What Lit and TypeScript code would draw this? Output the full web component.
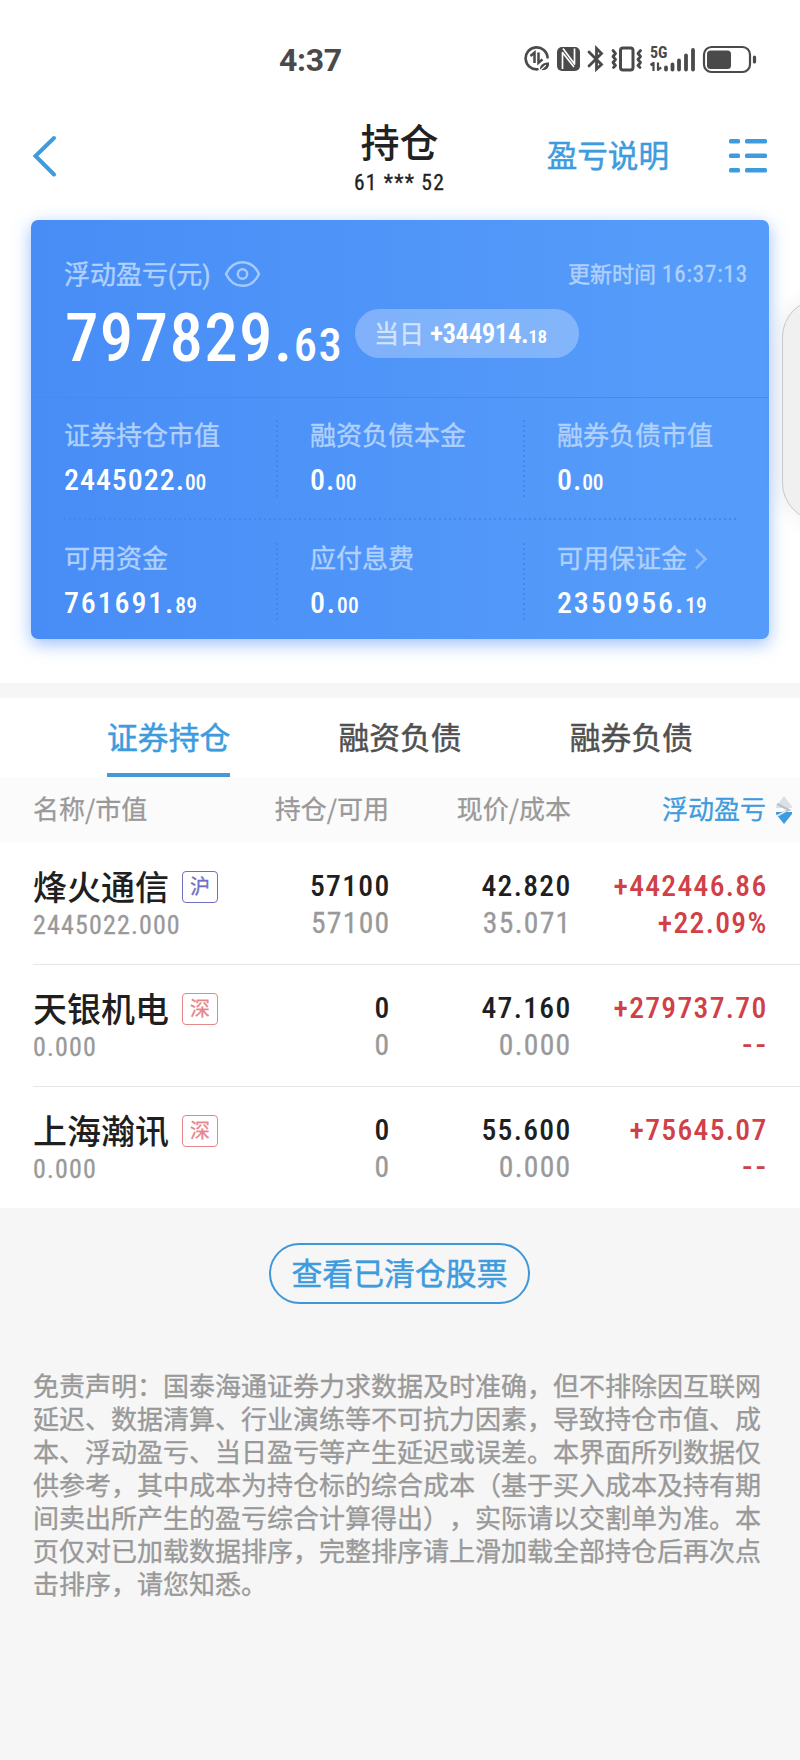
import { LitElement, html, css, svg } from "lit";
import { customElement, property } from "lit/decorators.js";

interface Holding {
  name: string;
  market: string;
  kind: string;
  value: string;
  qty: string;
  avail: string;
  price: string;
  cost: string;
  profit: string;
  rate: string;
}

const HOLDINGS: Holding[] = [
  { name: "烽火通信", market: "沪", kind: "sh", value: "2445022.000", qty: "57100", avail: "57100", price: "42.820", cost: "35.071", profit: "+442446.86", rate: "+22.09%" },
  { name: "天银机电", market: "深", kind: "sz", value: "0.000", qty: "0", avail: "0", price: "47.160", cost: "0.000", profit: "+279737.70", rate: "--" },
  { name: "上海瀚讯", market: "深", kind: "sz", value: "0.000", qty: "0", avail: "0", price: "55.600", cost: "0.000", profit: "+75645.07", rate: "--" },
];

const SUMMARY = [
  [
    { label: "证券持仓市值", int: "2445022.", dec: "00" },
    { label: "融资负债本金", int: "0.", dec: "00" },
    { label: "融券负债市值", int: "0.", dec: "00" },
  ],
  [
    { label: "可用资金", int: "761691.", dec: "89" },
    { label: "应付息费", int: "0.", dec: "00" },
    { label: "可用保证金", int: "2350956.", dec: "19", link: true },
  ],
];

@customElement("status-bar")
class StatusBar extends LitElement {
  static styles = css`
    :host { display: flex; height: 118px; align-items: center; color: #4a4a4a; padding-left: 279px; box-sizing: border-box; }
    .time { font: 700 32px/40px Roboto, sans-serif; width: 245px; letter-spacing: -0.3px; padding-top: 1px; }
    .icons { display: block; width: 240px; height: 30px; }
    .net { font: 700 16px "Roboto Condensed", sans-serif; }
  `;
  render() {
    return html`
      <div class="time">4:37</div>
      <svg class="icons" viewBox="0 0 240 30" fill="none" stroke="#4a4a4a" stroke-linecap="round" stroke-linejoin="round">
        <path d="M23.600 13.500A11 11 0 1 0 13.500 25.300" stroke-width="2.600" />
        <path d="M6.500 12l4-3.400v10.500M14.500 8.500v10.300l4-3.400" stroke-width="2.500" stroke-linecap="butt" stroke-linejoin="miter" />
        <path d="M16 26c-.500-5 3-7.500 9-7.500c.500 5.500-2.500 8.300-9 7.500z" fill="#4a4a4a" stroke="none" />
        <path d="M15.500 27l6-5.500" stroke="#fff" stroke-width="1.200" />
        <rect x="33" y="3" width="23" height="24" rx="5" fill="#4a4a4a" stroke="none" />
        <path d="M38.500 25V8.500L50 23M39 4.500L50.500 20V4.500" stroke="#fff" stroke-width="1.700" stroke-linecap="butt" />
        <path d="M65 8l12.500 12.500l-5 4.500V4.500l5 5l-12.500 12.500" stroke-width="2.800" stroke-linejoin="miter" />
        <rect x="96.500" y="4" width="12.500" height="22" rx="2.500" stroke-width="3" />
        <path d="M89 6.500l2.500 3l-2.500 3l2.500 3l-2.500 3l2.500 3l-2 2M116.500 6.500l-2.500 3l2.500 3l-2.500 3l2.500 3l-2.500 3l2 2" stroke-width="2.800" />
        <text class="net" x="126" y="14.300" fill="#4a4a4a" stroke="none">5G</text>
        <path d="M126.500 21l3-2.200v8.200M134 18.500v7.500l3.200-2.600" stroke-width="2.200" stroke-linecap="butt" />
        <path d="M142 23.500v2M148.500 20.500v5M155 16.500v9M162 11.500v14M169 6v19.500" stroke-width="3.800" />
        <rect x="180" y="3" width="46" height="25" rx="7.500" stroke-width="2.200" />
        <rect x="183" y="6.500" width="24" height="18.500" rx="3.500" fill="#4a4a4a" stroke="none" />
        <path d="M230.500 13v5" stroke-width="3.200" />
      </svg>
    `;
  }
}

@customElement("page-header")
class PageHeader extends LitElement {
  static styles = css`
    :host { display: grid; grid-template-columns: 1fr auto 1fr; height: 102px; box-sizing: border-box; padding: 0 33px 0 32px; font-family: "Noto Sans CJK SC", sans-serif; }
    .back { width: 26px; height: 44px; margin-top: 16px; }
    .title { text-align: center; color: #222; }
    .title h1 { margin: 2px 0 0; font-size: 39px; font-weight: 500; line-height: 40px; }
    .account { font: 400 21.5px/24px "Roboto Condensed", sans-serif; margin-top: 11px; letter-spacing: 1.200px; color: #222; -webkit-text-stroke: 0.3px currentColor; }
    .right { display: flex; justify-content: flex-end; gap: 59px; color: #3e9bdd; }
    .help { font-size: 30.6px; line-height: 40px; margin-top: 16px; -webkit-text-stroke: 0.5px currentColor; }
    .menu { width: 39px; height: 36px; margin-top: 20px; }
  `;
  render() {
    return html`
      <svg class="back" viewBox="0 0 26 44" fill="none" stroke="#3e9bdd" stroke-width="4" stroke-linecap="round"><path d="M22 4L3.500 22L22 40.500" /></svg>
      <div class="title"><h1>持仓</h1><div class="account">61 *** 52</div></div>
      <div class="right">
        <div class="help">盈亏说明</div>
        <svg class="menu" viewBox="0 0 39 36" fill="#3e9bdd">
          ${[1, 15.500, 30].map((y) => svg`<rect x="1" y=${y} width="11" height="4.500" rx="1.500" /><rect x="17" y=${y} width="22" height="4.500" rx="1.500" />`)}
        </svg>
      </div>
    `;
  }
}

@customElement("profit-card")
class ProfitCard extends LitElement {
  static styles = css`
    :host { display: block; margin: 0 31px; height: 419px; border-radius: 7px; background: linear-gradient(90deg, #488df6, #559bfa 85%); box-shadow: 0 5px 17px rgba(72, 141, 246, 0.55); color: #fff; font-family: "Noto Sans CJK SC", sans-serif; }
    .top { height: 178px; box-sizing: border-box; padding: 34px 22px 0 33px; border-bottom: 1px solid #468beb; }
    .line { display: flex; align-items: center; height: 40px; color: #b0d0fd; -webkit-text-stroke: 0.4px currentColor; }
    .caption { font-size: 26px; line-height: 38px; }
    .paren { font-family: "Roboto Condensed", sans-serif; }
    .eye { width: 37px; height: 28px; margin-left: 13px; }
    .updated { margin-left: auto; font-size: 22px; line-height: 38px; white-space: nowrap; padding-bottom: 2px; }
    .clock { font: 400 23px/38px "Roboto Condensed", sans-serif; letter-spacing: 0.9px; margin: 0 -1px 0 1px; }
    .total { display: flex; align-items: center; height: 60px; margin-top: 10px; }
    .num { font-family: "Roboto Condensed", sans-serif; font-weight: 500; }
    .big { font-size: 67px; line-height: 70px; letter-spacing: 1.300px; width: 291px; white-space: nowrap; padding-top: 14px; text-indent: 1px; }
    .big small { font-size: 46.500px; letter-spacing: 1.500px; }
    .pill { box-sizing: border-box; width: 224px; height: 49px; border-radius: 25px; margin-bottom: 2px; padding-left: 19px; display: flex; align-items: center; background: rgba(255, 255, 255, 0.28); white-space: nowrap; }
    .day { color: #d2e4ff; font-size: 25px; line-height: 44px; margin-right: 6px; padding-bottom: 3px; -webkit-text-stroke: 0.4px currentColor; }
    .today { font-size: 27px; font-weight: 600; line-height: 49px; padding-top: 5px; letter-spacing: -0.500px; }
    .today small { font-size: 19px; letter-spacing: -0.300px; }
    .summary { padding: 22px 32px 0 33px; }
    .row { display: grid; grid-template-columns: 212px 247px 1fr; height: 77px; }
    .rule { height: 2px; margin: 21px 0 23px; background: repeating-linear-gradient(90deg, #4287ec 0 2px, transparent 2px 5px); }
    .cell { padding-left: 34px; white-space: nowrap; background: repeating-linear-gradient(180deg, #4287ec 0 2px, transparent 2px 5px) no-repeat 0 0 / 2px 100%; }
    .cell:first-child { padding-left: 0; background: none; }
    .label { color: #b0d0fd; font-size: 26px; line-height: 30px; height: 30px; display: flex; align-items: center; margin-top: -1px; -webkit-text-stroke: 0.4px currentColor; }
    .value { font-size: 30px; line-height: 30px; margin-top: 16px; letter-spacing: 0.950px; }
    .value small { font-size: 21.500px; letter-spacing: -0.200px; }
    .wide { letter-spacing: 1.850px; }
    .wide small { letter-spacing: 0.200px; }
    .arrow { width: 14px; height: 22px; margin-left: 7px; margin-top: 4px; }
  `;
  render() {
    const row = (cells: any[], i: number) => html`
      <div class="row">
        ${cells.map((c) => html`
          <div class="cell">
            <div class="label">${c.label}${c.link ? html`<svg class="arrow" viewBox="0 0 14 22" fill="none" stroke="#8dbbfb" stroke-width="2.500"><path d="M2 1.500L11.500 11L2 20.500" /></svg>` : ""}</div>
            <div class="value num ${i ? "wide" : ""}">${c.int}<small>${c.dec}</small></div>
          </div>`)}
      </div>`;
    return html`
      <div class="top">
        <div class="line">
          <span class="caption">浮动盈亏<span class="paren">(</span>元<span class="paren">)</span></span>
          <svg class="eye" viewBox="0 0 37 28" fill="none" stroke="#a5cafd" stroke-width="2.400">
            <path d="M2 14C5.500 6.500 11.500 2.200 18.500 2.200S31.500 6.500 35 14C31.500 21.500 25.500 25.800 18.500 25.800S5.500 21.500 2 14z" stroke-linejoin="round" />
            <circle cx="18.500" cy="14" r="4.700" />
          </svg>
          <span class="updated">更新时间 <span class="clock">16:37:13</span></span>
        </div>
        <div class="total">
          <div class="big num">797829.<small>63</small></div>
          <div class="pill"><span class="day">当日</span><span class="today num">+344914.<small>18</small></span></div>
        </div>
      </div>
      <div class="summary">
        ${row(SUMMARY[0], 0)}
        <div class="rule"></div>
        ${row(SUMMARY[1], 1)}
      </div>
    `;
  }
}

@customElement("holding-row")
class HoldingRow extends LitElement {
  @property({ attribute: false }) item!: Holding;
  @property({ type: Boolean }) last = false;
  static styles = css`
    :host { display: block; background: #fff; font-family: "Noto Sans CJK SC", sans-serif; }
    .body { box-sizing: border-box; margin-left: 33px; height: 122px; border-bottom: 1px solid #e6e6e6; padding: 25px 34px 0 0; display: grid; grid-template-columns: 175px 181px 181px 1fr; }
    .plain { border-bottom: 0; height: 121px; }
    .name { display: flex; align-items: center; height: 36px; font-size: 34px; line-height: 36px; font-weight: 500; color: #1f1f1f; white-space: nowrap; }
    .badge { flex: none; box-sizing: border-box; width: 36px; height: 32px; margin-left: 13px; margin-top: 1px; border: 1.500px solid; border-radius: 4px; font-size: 20px; line-height: 28px; font-weight: 400; text-align: center; -webkit-text-stroke: 0.3px currentColor; }
    .sh { color: #6f6fc4; }
    .sz { color: #e5868b; }
    .num { font-family: "Roboto Condensed", sans-serif; font-size: 29.600px; line-height: 37px; letter-spacing: 1.300px; text-align: right; color: #1f1f1f; margin-right: -1.500px; white-space: nowrap; }
    .grey { color: #999; font-weight: 400; -webkit-text-stroke: 0.3px currentColor; }
    .mv { font-size: 26px; letter-spacing: 1.150px; text-align: left; line-height: 36px; margin-top: 3px; }
    .strong { font-weight: 500; }
    .red { color: #d14046; font-weight: 500; }
    .dash { font-family: Roboto, sans-serif; letter-spacing: 3.600px; margin-right: -3.500px; }
  `;
  render() {
    const h = this.item;
    return html`
      <div class="body ${this.last ? "plain" : ""}">
        <div><div class="name">${h.name}<span class="badge ${h.kind}">${h.market}</span></div><div class="num grey mv">${h.value}</div></div>
        <div><div class="num strong">${h.qty}</div><div class="num grey">${h.avail}</div></div>
        <div><div class="num strong">${h.price}</div><div class="num grey">${h.cost}</div></div>
        <div><div class="num red">${h.profit}</div><div class="num red ${h.rate === "--" ? "dash" : ""}">${h.rate}</div></div>
      </div>
    `;
  }
}

@customElement("app-root")
class AppRoot extends LitElement {
  static styles = css`
    :host { display: block; position: relative; width: 800px; height: 1760px; overflow: hidden; background: #f6f6f6; font-family: "Noto Sans CJK SC", sans-serif; }
    .head { background: #fff; height: 683px; }
    .handle { position: absolute; left: 782px; top: 299px; width: 90px; height: 222px; box-sizing: border-box; border: 1px solid #c8c8c8; border-radius: 38px; background: #f0f0f0; box-shadow: 0 0 22px rgba(0, 0, 0, 0.08); }
    .tabs { margin-top: 15px; height: 79px; padding: 0 53px; background: #fff; display: grid; grid-template-columns: repeat(3, 1fr); justify-items: center; font-size: 30.800px; color: #505050; -webkit-text-stroke: 0.5px currentColor; }
    .tab { box-sizing: border-box; height: 79px; line-height: 75px; border-bottom: 4px solid transparent; }
    .active { color: #3e9bdd; border-bottom-color: #4599d4; }
    .cols { background: #fbfbfb; height: 66px; line-height: 61px; padding: 0 6px 0 33px; display: grid; grid-template-columns: 175px 181px 182px 195px 1fr; text-align: right; font-size: 26px; color: #999; -webkit-text-stroke: 0.3px currentColor; }
    .cols span:first-child { text-align: left; }
    .sorted { color: #3e9bdd; }
    .sort { width: 18px; height: 28px; margin: 19px 0 0 9px; }
    .cleared { display: block; box-sizing: border-box; width: 261px; height: 61px; margin: 35px 0 0 269px; border: 2px solid #3e98d8; border-radius: 31px; background: none; color: #3e9bdd; font: 400 30.900px/52px "Noto Sans CJK SC", sans-serif; padding: 0 0 4px; -webkit-text-stroke: 0.5px currentColor; }
    .note { margin: 64px 0 0 33px; width: 729px; font-size: 26px; line-height: 33px; color: #999; text-spacing-trim: space-all; -webkit-text-stroke: 0.35px currentColor; }
  `;
  render() {
    return html`
      <div class="head">
        <status-bar></status-bar>
        <page-header></page-header>
        <profit-card></profit-card>
      </div>
      <div class="tabs">
        <div class="tab active">证券持仓</div>
        <div class="tab">融资负债</div>
        <div class="tab">融券负债</div>
      </div>
      <div class="cols">
        <span>名称/市值</span><span>持仓/可用</span><span>现价/成本</span><span class="sorted">浮动盈亏</span>
        <svg class="sort" viewBox="0 0 18 28"><path d="M9 0l8 10.500v1.500H1v-1.500z" fill="#dcdfe3" /><path d="M2 8l12 6l-12 5" fill="none" stroke="#b9c0c8" stroke-width="2" /><path d="M1 16h16v2L9 28L1 18z" fill="#3e9bdd" /><path d="M2 20l9-5" stroke="#dfe9f2" stroke-width="2" /></svg>
      </div>
      ${HOLDINGS.map((h, i) => html`<holding-row .item=${h} ?last=${i === HOLDINGS.length - 1}></holding-row>`)}
      <button class="cleared">查看已清仓股票</button>
      <div class="note">免责声明：国泰海通证券力求数据及时准确，但不排除因互联网延迟、数据清算、行业演练等不可抗力因素，导致持仓市值、成本、浮动盈亏、当日盈亏等产生延迟或误差。本界面所列数据仅供参考，其中成本为持仓标的综合成本（基于买入成本及持有期间卖出所产生的盈亏综合计算得出），实际请以交割单为准。本页仅对已加载数据排序，完整排序请上滑加载全部持仓后再次点击排序，请您知悉。</div>
      <div class="handle"></div>
    `;
  }
}
